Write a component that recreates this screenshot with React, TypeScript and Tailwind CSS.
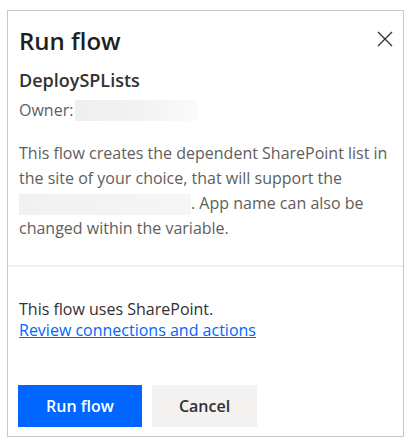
export default function App() {
  return (
    <div className="min-h-screen bg-white pl-[7px] pt-[10px] font-['Open_Sans','Noto_Sans',sans-serif]">
      <div className="flex h-[427px] w-[397px] flex-col border border-[#c8c8c8] bg-white">
        {/* Header */}
        <div className="flex items-start justify-between px-[11px] pt-[13px]">
          <h1 className="text-[24px] font-semibold leading-[34px] text-[#201f1e]">Run flow</h1>
          <button className="mr-[-1px] mt-[7px] text-[#323130]">
            <svg width="16" height="16" viewBox="0 0 16 16" fill="none" stroke="currentColor" strokeWidth="1.3">
              <path d="M1 1 L15 15 M15 1 L1 15" />
            </svg>
          </button>
        </div>

        <div className="px-[11px]">
          <h2 className="mt-[9px] text-[18px] font-semibold leading-[26px] text-[#323130]">DeploySPLists</h2>
          <div className="mt-[5px] flex items-center text-[16px] leading-[24px] text-[#605e5c]">
            <span>Owner:</span>
            <span className="ml-[2px] inline-block h-[21px] w-[123px] bg-gradient-to-r from-[#efefef] via-[#f2f2f2] to-[#fbfbfb]" />
          </div>
          <p className="mt-[19px] whitespace-nowrap text-[16px] leading-[25px] text-[#605e5c]">
            This flow creates the dependent SharePoint list in
            <br />
            the site of your choice, that will support the
            <br />
            <span className="inline-block h-[21px] w-[172px] bg-gradient-to-r from-[#f1f1f1] to-[#f6f6f6] align-middle" />
            . App name can also be
            <br />
            changed within the variable.
          </p>
        </div>

        <div className="mt-[24px] h-[2px] w-full bg-[#f3f2f1]" />

        <div className="flex flex-col items-start px-[11px] pt-[32px]">
          <p className="text-[16px] leading-[21px] text-[#323130]">This flow uses SharePoint.</p>
          <a href="#" className="text-[16px] leading-[20px] text-[#0066ff] underline">
            Review connections and actions
          </a>
        </div>

        <div className="mt-auto flex gap-[10px] px-[10px] pb-[9px]">
          <button className="h-[42px] w-[124px] bg-[#0066ff] text-[16px] font-semibold text-white">Run flow</button>
          <button className="h-[42px] w-[105px] bg-[#f3f2f1] text-[16px] font-semibold text-[#323130]">Cancel</button>
        </div>
      </div>
    </div>
  );
}
